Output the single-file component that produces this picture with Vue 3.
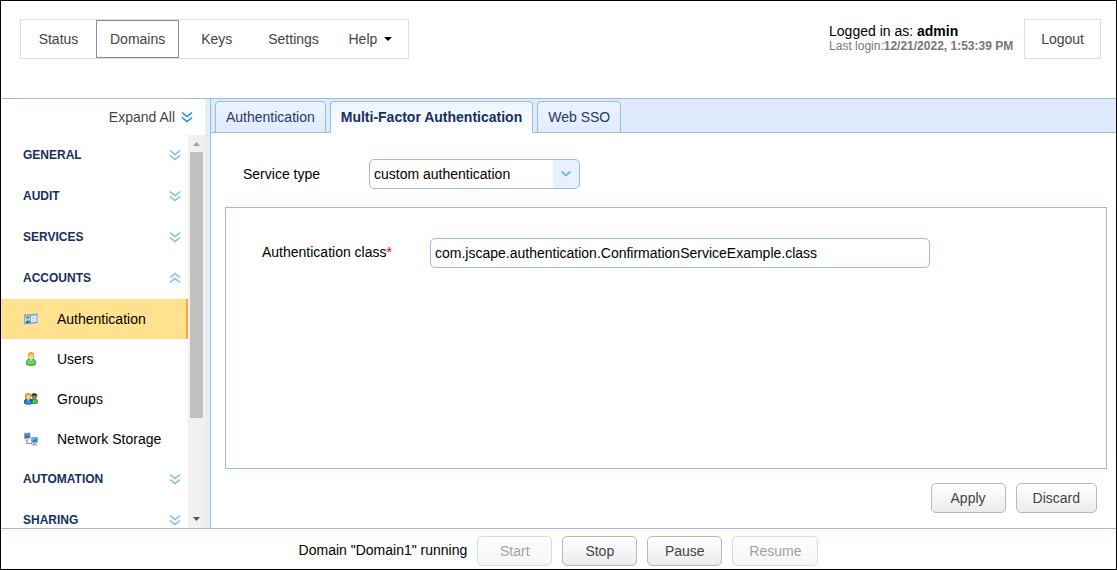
<script setup>
import { ref } from 'vue'

const menu = ['Status', 'Domains', 'Keys', 'Settings', 'Help']
const groups = [
  { name: 'GENERAL', items: [] },
  { name: 'AUDIT', items: [] },
  { name: 'SERVICES', items: [] },
  { name: 'ACCOUNTS', open: true, items: ['Authentication', 'Users', 'Groups', 'Network Storage'] },
  { name: 'AUTOMATION', items: [] },
  { name: 'SHARING', items: [] }
]
const tabs = ['Authentication', 'Multi-Factor Authentication', 'Web SSO']
const actions = [
  { label: 'Start', disabled: true },
  { label: 'Stop', disabled: false },
  { label: 'Pause', disabled: false },
  { label: 'Resume', disabled: true }
]
const serviceType = ref('custom authentication')
const authClass = ref('com.jscape.authentication.ConfirmationServiceExample.class')
</script>

<template>
  <div class="app">
    <header class="header">
      <nav class="menu">
        <button v-for="m in menu" :key="m" type="button" class="menu-item" :class="{ active: m === 'Domains' }">
          {{ m }}
          <svg v-if="m === 'Help'" class="caret" width="8" height="4" viewBox="0 0 8 4" aria-hidden="true"><path d="M0 0h8L4 4z" /></svg>
        </button>
      </nav>
      <div class="session">
        <div class="login">
          <div>Logged in as: <b>admin</b></div>
          <div class="last">Last login:<b>12/21/2022, 1:53:39 PM</b></div>
        </div>
        <button type="button" class="logout">Logout</button>
      </div>
    </header>

    <div class="body">
      <aside class="sidebar">
        <button type="button" class="expand">
          Expand All
          <svg width="12" height="12" viewBox="0 0 12 12" aria-hidden="true"><path d="M1 1.5l5 4 5-4M1 6.5l5 4 5-4" /></svg>
        </button>
        <div class="scroller">
          <div class="list">
            <section v-for="g in groups" :key="g.name">
              <button type="button" class="group" :aria-expanded="!!g.open">
                {{ g.name }}
                <svg width="12" height="12" viewBox="0 0 12 12" aria-hidden="true">
                  <path v-if="g.open" d="M1 5.5l5-4 5 4M1 10.5l5-4 5 4" />
                  <path v-else d="M1 1.5l5 4 5-4M1 6.5l5 4 5-4" />
                </svg>
              </button>
              <a v-for="i in g.items" :key="i" href="#" class="item" :class="{ current: i === 'Authentication' }">
                <svg v-if="i === 'Authentication'" width="16" height="16" viewBox="0 0 16 16" aria-hidden="true">
                  <path d="M1 3.5L14.5 2.5V12L1.5 13.5z" fill="#5f9fe4" />
                  <path d="M1 3.5L14.5 2.5V4L1 5z" fill="#82bdf4" />
                  <path d="M8 5l5.5-.4v6.2L8 11.5z" fill="#f2f5f8" />
                  <path d="M9 6.5l3.5-.3M9 8l3.5-.3M9 9.5l3.5-.3" stroke="#b4c0cc" stroke-width=".7" />
                  <path d="M2.2 5.5l4.8-.3v6.3l-4.8.5z" fill="#bfdcf8" />
                  <path d="M2.5 12c0-3 4.5-3.5 4.5-.5z" fill="#1d62b5" />
                  <circle cx="4.7" cy="7.6" r="1.6" fill="#f2b755" />
                  <path d="M3 7.3c0-2 3.4-2.2 3.4-.2L5 6.8z" fill="#765024" />
                </svg>
                <svg v-else-if="i === 'Users'" width="16" height="16" viewBox="0 0 16 16" aria-hidden="true">
                  <path d="M3 13c0-5 2-5.500 5-5.500s5 .5 5 5.500c0 2.500-10 2.500-10 0z" fill="#35aa36" />
                  <path d="M4 12.500c0-3.500 1.500-4 4-4s4 .5 4 4c-2 1.500-6 1.500-8 0z" fill="#68d85c" />
                  <path d="M6.500 8h3L8 10z" fill="#edffd9" />
                  <ellipse cx="8" cy="4.700" rx="3.200" ry="3.700" fill="#d79322" />
                  <ellipse cx="8" cy="5.300" rx="2.400" ry="2.800" fill="#ffd692" />
                  <path d="M5 4.800C5 .8 11 .2 11 4.800L9.500 3.500C8 4.500 6.500 3.500 5 4.800z" fill="#e8b247" />
                </svg>
                <svg v-else-if="i === 'Groups'" width="16" height="16" viewBox="0 0 16 16" aria-hidden="true">
                  <path d="M7 11.500c0-4 1.500-4 4-4s4 .5 4 4c0 2-8 2-8 0z" fill="#299f38" />
                  <path d="M9 11.500c0-3 4.500-3.500 5 0-1 1-4 1-5 0z" fill="#5acb4f" />
                  <circle cx="11.300" cy="5.300" r="2.700" fill="#ad7337" />
                  <path d="M8.300 5C8 1.400 14.500 1.400 14.300 5.500L12 4z" fill="#252c28" />
                  <path d="M1 12c0-4 1.500-4.500 4.200-4.500s4.300.5 4.300 4.500c0 2.300-8.500 2.300-8.500 0z" fill="#1457ad" />
                  <path d="M2 11.700c.3-3 6-3.500 6.500 0-1 1.300-5 1.300-6.500 0z" fill="#428ce0" />
                  <path d="M4 8h2.700l-1.400 2z" fill="#e9f5ff" />
                  <circle cx="5" cy="5.200" r="3.100" fill="#ce8420" />
                  <ellipse cx="5.300" cy="5.700" rx="2.200" ry="2.400" fill="#ffd18a" />
                  <path d="M2 5.200C2 1.200 8 1 8 5L6.500 4C5 5 3.500 4 2 5.200z" fill="#dda02e" />
                </svg>
                <svg v-else width="16" height="16" viewBox="0 0 16 16" aria-hidden="true">
                  <path d="M4 9v3.500h5" fill="none" stroke="#858d94" stroke-width="1.200" />
                  <path d="M1 2l6.500-.5v6L1 8z" fill="#a6b4c2" />
                  <path d="M1.800 2.700l5-.3v4.400l-5 .5z" fill="#316bbc" />
                  <path d="M1.800 2.700l5-.3v1.800l-5 1z" fill="#5990d7" />
                  <path d="M2.500 8.500l4-.2.500 1-5 .4z" fill="#aeb6bd" />
                  <path d="M8 6h7v6H8z" fill="#aab7c3" />
                  <path d="M8.800 6.800h5.400v4.300H8.800z" fill="#2687e5" />
                  <path d="M8.800 6.800h5.400L8.800 10z" fill="#65bafa" />
                  <path d="M10 12h3v1.500h1.500v1h-6v-1H10z" fill="#a1a9b0" />
                </svg>
                <span>{{ i }}</span>
              </a>
            </section>
          </div>
          <div class="scrollbar" aria-hidden="true">
            <svg width="17" height="17" viewBox="0 0 17 17"><path d="M5 11h7L8.500 7z" fill="#a3a3a3" /></svg>
            <div class="track"><div class="thumb"></div></div>
            <svg width="17" height="17" viewBox="0 0 17 17"><path d="M5 6h7l-3.500 4z" fill="#505050" /></svg>
          </div>
        </div>
      </aside>
      <div class="splitter"></div>

      <main class="main">
        <div class="tabs" role="tablist">
          <button v-for="t in tabs" :key="t" type="button" role="tab" class="tab" :class="{ selected: t === tabs[1] }" :aria-selected="t === tabs[1]">{{ t }}</button>
        </div>
        <div class="content">
          <div class="row">
            <label for="service-type">Service type</label>
            <div class="select">
              <select id="service-type" v-model="serviceType">
                <option>custom authentication</option>
              </select>
              <svg width="12" height="8" viewBox="0 0 12 8" aria-hidden="true"><path d="M1.500 1.500L6 5.500l4.500-4" /></svg>
            </div>
          </div>
          <div class="panel">
            <label for="auth-class">Authentication class<span class="required">*</span></label>
            <input id="auth-class" v-model="authClass" type="text" />
          </div>
          <div class="buttons">
            <button type="button" class="btn">Apply</button>
            <button type="button" class="btn">Discard</button>
          </div>
        </div>
      </main>
    </div>

    <footer class="footer">
      <span class="status">Domain "Domain1" running</span>
      <button v-for="a in actions" :key="a.label" type="button" class="btn" :disabled="a.disabled">{{ a.label }}</button>
    </footer>
  </div>
</template>

<style>
body {
  margin: 0;
}
</style>

<style scoped>
.app,
.app * {
  box-sizing: border-box;
}
.app {
  display: flex;
  flex-direction: column;
  height: 100vh;
  border: 1px solid #000;
  background: #fff;
  color: #000;
  font: 14px/16px "Liberation Sans", Arial, sans-serif;
}
button,
input,
select {
  margin: 0;
  font: inherit;
}
.header {
  display: flex;
  justify-content: space-between;
  align-items: flex-start;
  flex: none;
  padding: 18px 15px 39px 19px;
  border-bottom: 1px solid #99bbe8;
}
.menu {
  display: flex;
  height: 40px;
  border: 1px solid #dcdee2;
}
.menu-item {
  min-width: 75px;
  padding: 0 13px;
  border: 1px solid transparent;
  background: none;
  color: #444;
}
.menu-item.active {
  border-color: #8c8c8c;
}
.caret {
  margin-left: 3px;
  vertical-align: 3px;
  fill: #000;
}
.session {
  display: flex;
  gap: 11px;
}
.login {
  padding-top: 4px;
}
.last {
  color: #777;
  font-size: 12px;
  line-height: 14px;
}
.logout {
  height: 40px;
  padding: 0 16px;
  border: 1px solid #dcdee2;
  background: #fff;
  color: #444;
}
.body {
  display: flex;
  flex: 1;
  min-height: 0;
}
.sidebar {
  display: flex;
  flex-direction: column;
  flex: none;
  width: 204px;
}
.expand {
  display: flex;
  justify-content: flex-end;
  align-items: center;
  gap: 6px;
  height: 36px;
  padding: 0 12px 0 0;
  border: 0;
  background: none;
  color: #444;
}
.expand svg,
.group svg {
  fill: none;
  stroke: #7abcf0;
  stroke-width: 1.500;
}
.expand svg {
  stroke: #1b8ae0;
}
.scroller {
  display: flex;
  flex: 1;
  min-height: 0;
}
.list {
  flex: 1;
  overflow: hidden;
}
.group {
  display: flex;
  justify-content: space-between;
  align-items: center;
  width: 100%;
  height: 41px;
  padding: 0 7px 1px 22px;
  border: 0;
  background: none;
  color: #15305f;
  font-size: 12px;
  font-weight: bold;
}
.item {
  display: flex;
  align-items: center;
  gap: 18px;
  height: 40px;
  padding-left: 22px;
  color: #000;
  text-decoration: none;
}
.item.current {
  border-right: 2px solid #ffa940;
  background: #ffe18e;
}
.scrollbar {
  display: flex;
  flex-direction: column;
  width: 17px;
  background: #f1f1f1;
}
.scrollbar svg {
  display: block;
  flex: none;
}
.track {
  flex: 1;
  padding: 0 2px;
}
.thumb {
  height: 74%;
  background: #c1c1c1;
}
.splitter {
  flex: none;
  width: 6px;
  border-right: 1px solid #99bbe8;
  background: #e6eef8;
}
.main {
  display: flex;
  flex-direction: column;
  flex: 1;
  min-width: 0;
}
.tabs {
  display: flex;
  gap: 4px;
  height: 34px;
  padding: 2px 4px 0;
  border-bottom: 1px solid #99bbe8;
  background: #dfebfd;
}
.tab {
  height: 32px;
  padding: 0 10px;
  border: 1px solid #99bbe8;
  border-radius: 4px 4px 0 0;
  background: linear-gradient(#edf4ff, #e0ebfd);
  color: #233b66;
}
.tab.selected {
  border-bottom-color: #fff;
  background: linear-gradient(#edf4ff, #fff);
  color: #15305f;
  font-weight: bold;
}
.content {
  display: flex;
  flex-direction: column;
  flex: 1;
  padding: 26px 9px 15px 14px;
}
.row {
  display: flex;
  align-items: center;
  margin-bottom: 18px;
  padding-left: 18px;
}
.row label {
  width: 126px;
}
.select {
  position: relative;
}
.select select {
  display: block;
  width: 211px;
  height: 30px;
  padding: 0 30px 0 4px;
  border: 1px solid #99bbe8;
  border-radius: 5px;
  appearance: none;
  background: linear-gradient(#e9f1fe, #e9f1fe) right / 26px 100% no-repeat #fff;
  color: #000;
}
.select svg {
  position: absolute;
  top: 11px;
  right: 8px;
  fill: none;
  stroke: #73baf2;
  stroke-width: 2;
  pointer-events: none;
}
.panel {
  display: flex;
  align-items: flex-start;
  flex: 1;
  padding: 30px 36px;
  border: 1px solid #99bbe8;
}
.panel label {
  width: 168px;
  line-height: 28px;
}
.required {
  color: #e00000;
}
.panel input {
  width: 500px;
  height: 30px;
  padding: 0 4px;
  border: 1px solid #99bbe8;
  border-radius: 5px;
  background: #fff;
  color: #000;
}
.buttons {
  display: flex;
  justify-content: flex-end;
  gap: 10px;
  padding: 14px 10px 0 0;
}
.btn {
  min-width: 75px;
  height: 30px;
  padding: 0 16px;
  border: 1px solid #b8b8b8;
  border-radius: 5px;
  background: linear-gradient(#fff, #ececec);
  color: #444;
}
.btn:disabled {
  opacity: 0.5;
}
.footer {
  display: flex;
  justify-content: center;
  gap: 10px;
  flex: none;
  padding: 7px 0 3px;
  border-top: 1px solid #99bbe8;
}
.status {
  line-height: 28px;
}
</style>
